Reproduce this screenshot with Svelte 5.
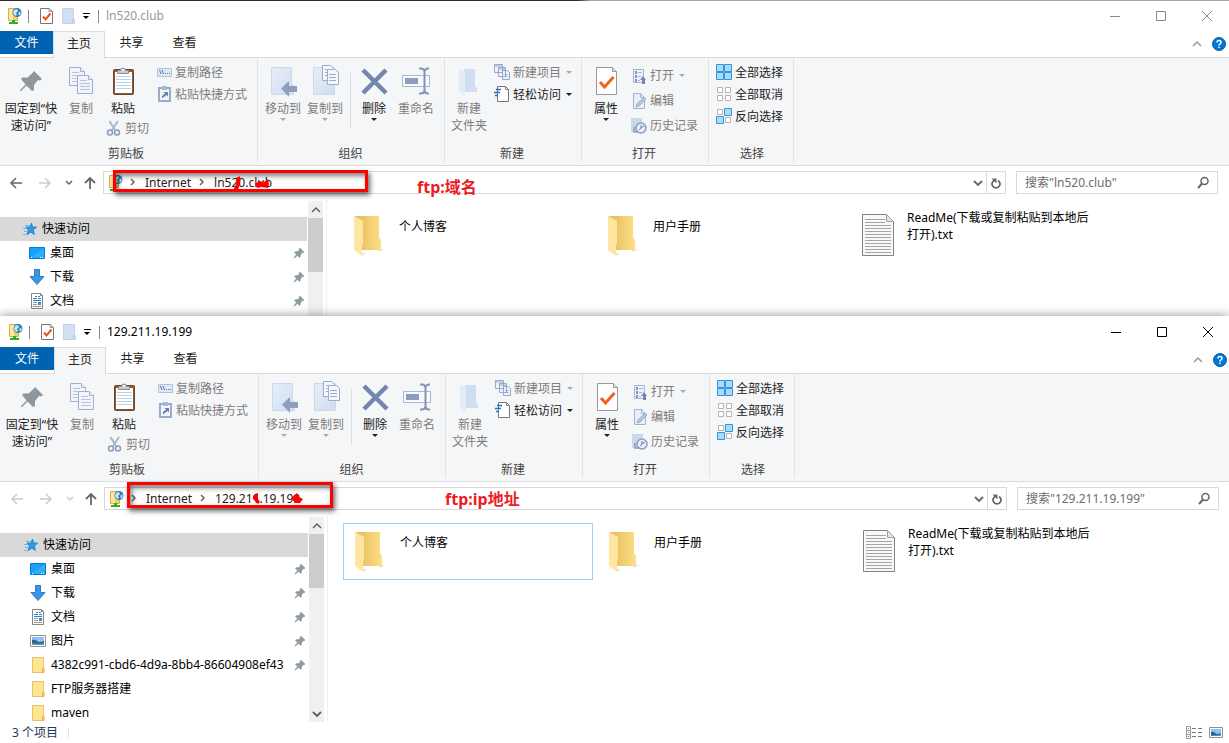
<script>
  const pinned = [
    { icon: 'desktop', label: '桌面', pin: true },
    { icon: 'download', label: '下载', pin: true },
    { icon: 'document', label: '文档', pin: true }
  ];
  const windows = [
    {
      id: 'domain', title: 'ln520.club', active: false, canGoBack: true,
      places: pinned, selected: -1, note: 'ftp:域名'
    },
    {
      id: 'ip', title: '129.211.19.199', active: true, canGoBack: false,
      places: [
        ...pinned,
        { icon: 'picture', label: '图片', pin: true },
        { icon: 'smallfolder', label: '4382c991-cbd6-4d9a-8bb4-86604908ef43', pin: true },
        { icon: 'smallfolder', label: 'FTP服务器搭建', pin: false },
        { icon: 'smallfolder', label: 'maven', pin: false }
      ],
      selected: 0, note: 'ftp:ip地址'
    }
  ];
  const files = [
    { icon: 'folder', name: '个人博客' },
    { icon: 'folder', name: '用户手册' },
    { icon: 'text', name: 'ReadMe(下载或复制粘贴到本地后打开).txt' }
  ];
</script>

{#snippet icon(name)}
  {#if name === 'site'}
    <svg width="16" height="16" viewBox="0 0 16 16"><path d="M1.500.500h9v12h-9z" fill="#f5cf60" stroke="#dcae3c" /><path d="M2 1h4v11H2z" fill="#ffe69a" /><circle cx="10" cy="4.500" r="4.500" fill="#2f7fba" /><path d="M7 2l3-1 1 2-2 2 1 2-2 1-2-3zM11.500 4.500l2-1v3l-2 1z" fill="#c5e8f5" /><path d="M5 12h3v2h3v2H2v-2h3z" fill="#26b02e" /></svg>
  {:else if name === 'checkpage'}
    <svg width="13" height="16" viewBox="0 0 13 16"><path d="M.5.5h8.500l3.500 3v12H.5z" fill="#fff" stroke="#777" /><path d="M9 .5v3h3.500" fill="none" stroke="#999" /><path d="M3 8.500l2.500 3 5-6" fill="none" stroke="#e8541f" stroke-width="2" /></svg>
  {:else if name === 'blankfolder'}
    <svg width="14" height="16" viewBox="0 0 14 16"><path d="M.5.5h11v10l1 1v4H.5z" fill="#d3dff2" stroke="#c3d1e8" /><path d="M10.500 11v4" stroke="#b4c5e0" /></svg>
  {:else if name === 'pin'}
    <svg width="32" height="32" viewBox="0 0 32 32"><path d="M19 6l8 8-2 1.500-2-.5-4 5v5l-2 1-5.500-5.500L6 26l-1 0 0-1 5.500-5.500L6 14l1.500-1.500 5 0 5-4.500z" fill="#8c979f" /></svg>
  {:else if name === 'copy'}
    <svg width="32" height="32" viewBox="0 0 32 32"><g fill="#f1f5fb" stroke="#a0b1cf"><path d="M4.500 2.500h11l4 4v14h-15z" /><path d="M15.500 2.500v4h4" /><path d="M7 7.500h7M7 10.500h6M7 13.500h6M7 16.500h6" stroke="#b7c5dc" /><path d="M12.500 10.500h11l4 4v14h-15z" /><path d="M23.500 10.500v4h4" /><path d="M15 15.500h7M15 18.500h10M15 21.500h10M15 24.500h10" stroke="#b7c5dc" /></g></svg>
  {:else if name === 'paste'}
    <svg width="32" height="32" viewBox="0 0 32 32"><rect x="6.500" y="4.500" width="20" height="25" rx="1" fill="#8a5a36" stroke="#6f452a" /><path d="M8 7h17v21H8z" fill="#fff" /><path d="M9 11.500h15M9 14.500h15M9 17.500h15M9 20.500h15M9 23.500h15" stroke="#b9d2e6" /><path d="M10.500 8.500v-3h3a2.500 2.500 0 0 1 5 0h3v3z" fill="#c9ccd0" stroke="#8b8f94" /><circle cx="16" cy="5" r="1" fill="#fff" /></svg>
  {:else if name === 'cut'}
    <svg width="16" height="16" viewBox="0 0 16 16"><path d="M3.500 1l5.500 9M12 1L6 10" stroke="#a9b8ce" stroke-width="2" /><circle cx="4" cy="12.500" r="2.500" fill="none" stroke="#8a9cbc" stroke-width="1.500" /><circle cx="11" cy="12.500" r="2.500" fill="none" stroke="#8a9cbc" stroke-width="1.500" /></svg>
  {:else if name === 'path'}
    <svg width="16" height="16" viewBox="0 0 16 16"><path d="M.5 4.500h14v8H.5z" fill="#dfe8f5" stroke="#b3c1da" /><path d="M2.500 6l1.500 4M5 6l1.500 4M8 9.500h1M10 9.500h1M12 9.500h1" stroke="#5c76a3" fill="none" /></svg>
  {:else if name === 'shortcut'}
    <svg width="16" height="16" viewBox="0 0 16 16"><rect x="2" y="2" width="11" height="13" fill="#f2f6fc" stroke="#9aabca" stroke-width="2" /><path d="M5 0h5v4H5z" fill="#a9b7cf" /><path d="M5 12.500V10l3-2.500L6.500 6h4.500v4.500L9.500 9z" fill="#6680ab" /></svg>
  {:else if name === 'moveto'}
    <svg width="32" height="32" viewBox="0 0 32 32"><path d="M4.500 2.500h20v16l2 2v9h-22z" fill="url(#pale)" stroke="#ccd9ed" /><path d="M14 23.500l8-7.500v5h8v6h-8v5z" fill="#8e9fbe" /></svg>
  {:else if name === 'copyto'}
    <svg width="32" height="32" viewBox="0 0 32 32"><path d="M4.500 2.500h21v27h-21z" fill="url(#pale)" stroke="#ccd9ed" /><g fill="#f4f7fc" stroke="#9aaccc"><path d="M13.500.5h8l3 3v12h-11z" /><path d="M18.500 4.500h8l3 3v12h-11z" /><path d="M16 4.500h2M16 7.500h2M16 10.500h2M20 9.500h7M20 12.500h7M20 15.500h7" /></g></svg>
  {:else if name === 'delete'}
    <svg width="32" height="32" viewBox="0 0 32 32"><path d="M5 5l23 23M28 5L5 28" stroke="#7387ad" stroke-width="4.500" /></svg>
  {:else if name === 'rename'}
    <svg width="32" height="32" viewBox="0 0 32 32"><path d="M2.500 10.500h27v11h-27z" fill="#f7fafe" stroke="#a8b9d6" /><path d="M5 13h13v6H5z" fill="#8c9dbe" /><path d="M19 3.500h2q3 0 3.500 3 .5-3 3.500-3h1M24.500 6v20M19 28.500h2q3 0 3.500-3 .5 3 3.500 3h1" fill="none" stroke="#8495b4" stroke-width="2" /></svg>
  {:else if name === 'newfolder'}
    <svg width="32" height="32" viewBox="0 0 32 32"><path d="M6 4h16v17l2 2v4H11V4z" fill="#d0def2" /><path d="M6 4l6 3v20l-1 4-5-5z" fill="#e2ebf8" /></svg>
  {:else if name === 'newitem'}
    <svg width="16" height="16" viewBox="0 0 16 16"><g fill="#eef3fa" stroke="#96a9c9"><path d="M.5.5h8v8h-8zM4.500 3.500h7v9h-7zM8.500 6.500h5l2 2v7h-7z" /><path d="M.5 2h8M4.500 5h7M10.500 10.500h3M10.500 12.500h3" /></g></svg>
  {:else if name === 'easy'}
    <svg width="16" height="16" viewBox="0 0 16 16"><path d="M3.500.5h8l3 3v12h-11z" fill="#fff" stroke="#777" /><path d="M11.500.5v3h3" fill="none" stroke="#888" /><path d="M2 3.500h5M0 6.500h6M1 9.500h3" stroke="#2673ba" stroke-width="1.500" /></svg>
  {:else if name === 'props'}
    <svg width="32" height="32" viewBox="0 0 32 32"><path d="M6.500 2.500h16l4 4v23h-20z" fill="#fff" stroke="#999" /><path d="M22.500 2.500v4h4" fill="#ddd" stroke="#999" /><path d="M10 17l4.500 5 9-10" fill="none" stroke="#f26322" stroke-width="3" /></svg>
  {:else if name === 'open'}
    <svg width="16" height="16" viewBox="0 0 16 16"><path d="M2.500 1.500h10v13h-10z" fill="#edf2fa" stroke="#a5b5d1" /><path d="M4 3h2v3H4zM4 7h2v3H4zM4 11h2v3H4z" fill="#8297bf" /><path d="M7 4.500h4M7 8.500h3M7 12.500h2" stroke="#a5b5d1" /><path d="M11 16v-4H9l3-4 3 4h-1v4z" fill="#7388b0" /></svg>
  {:else if name === 'edit'}
    <svg width="16" height="16" viewBox="0 0 16 16"><path d="M2.500.5h7l4 4v11h-11z" fill="#e8eff9" stroke="#a3b4d0" /><path d="M9.500.5v4h4" fill="none" stroke="#a3b4d0" /><path d="M5 14l1-3 7-7 2 2-7 7z" fill="#b7c8e2" stroke="#9caecd" /></svg>
  {:else if name === 'history'}
    <svg width="16" height="16" viewBox="0 0 16 16"><path d="M0 0h11v14H0z" fill="#cad8ed" /><circle cx="10" cy="10" r="5" fill="#e6eefa" stroke="#8d9ebf" stroke-width="1.500" /><path d="M10 7v3l-2 2M10 10l3-2" fill="none" stroke="#6c82a9" /><path d="M3 9v5h4" fill="none" stroke="#8d9ebf" stroke-width="1.500" /></svg>
  {:else if name === 'all'}
    <svg width="16" height="16" viewBox="0 0 16 16"><path d="M.5.5h7v7h-7zM8.500.5h7v7h-7zM.5 8.500h7v7h-7zM8.500 8.500h7v7h-7z" fill="#a9dafa" stroke="#3494dd" /></svg>
  {:else if name === 'none'}
    <svg width="16" height="16" viewBox="0 0 16 16"><path d="M1.500 1.500h5v5h-5zM9.500 1.500h5v5h-5zM1.500 9.500h5v5h-5zM9.500 9.500h5v5h-5z" fill="#fff" stroke="#b4b4b4" /></svg>
  {:else if name === 'invert'}
    <svg width="16" height="16" viewBox="0 0 16 16"><path d="M1.500 1.500h5v5h-5zM9.500 9.500h5v5h-5z" fill="#fff" stroke="#b4b4b4" /><path d="M8.500.5h7v7h-7zM.5 8.500h7v7h-7z" fill="#a9dafa" stroke="#3494dd" /></svg>
  {:else if name === 'star'}
    <svg width="16" height="16" viewBox="0 0 16 16"><path d="M9.500 2l1 4 4 .2-3.200 2.800 1 4.500-3.300-2.500-4 2.500 1.500-4.500L4 6.200l4-.2z" fill="#2f9ae6" stroke="#1f82c9" /><path d="M3 4.500h4M1 7.500h4M2 10.500h3M1 13.500h3" stroke="#6db7e6" /></svg>
  {:else if name === 'desktop'}
    <svg width="16" height="16" viewBox="0 0 16 16"><path d="M.5 2.500h15v11H.5z" fill="#15a1fb" stroke="#087ad0" /><path d="M1 13L15 3v9.500H1z" fill="#4abaff" opacity=".5" /><path d="M2 12.500h1M11 12.500h1M13 12.500h1" stroke="#fff" /></svg>
  {:else if name === 'download'}
    <svg width="16" height="16" viewBox="0 0 16 16"><path d="M5.500.5h5v7h4.500L8 15.500 1 7.500h4.500z" fill="#3c96e6" stroke="#2d7cc5" /></svg>
  {:else if name === 'document'}
    <svg width="16" height="16" viewBox="0 0 16 16"><path d="M2.500.5h9l2 2v13h-11z" fill="#fff" stroke="#858585" /><path d="M11.500.5v2h2" fill="none" stroke="#858585" /><path d="M6 3.500h2M4 5.500h4M4 7.500h8M9 3.500h2M9 5.500h3" stroke="#2684cf" /><path d="M4 9.500h4M4 11.500h4M4 13.500h8" stroke="#999" /><path d="M9 9h3v3H9z" fill="#3f8bc4" /></svg>
  {:else if name === 'picture'}
    <svg width="16" height="16" viewBox="0 0 16 16"><path d="M.5 2.500h15v11H.5z" fill="#fff" stroke="#919191" /><path d="M2 4h12v8H2z" fill="#8bc2f2" /><path d="M2 7q3-1 5 1t7 0v4H2z" fill="#2b6487" /><path d="M2 10q6 1 12 0v2H2z" fill="#5b95b8" /></svg>
  {:else if name === 'smallfolder'}
    <svg width="16" height="16" viewBox="0 0 16 16"><path d="M2.500.5h11v15h-11z" fill="#ffe494" stroke="#e8c35c" /><path d="M12.500 15.500v-4l1.500-1v5z" fill="#ffd867" stroke="#dfb64a" /></svg>
  {:else if name === 'tack'}
    <svg width="12" height="12" viewBox="0 0 12 12"><path d="M7 1l4 4-1 1-1-.2L7.500 8v1.500l-1 1-2-2L1.500 11H1v-.5l2.500-3L1.500 5.500l1-1h2L6.500 3 6 2z" fill="#8c99a2" stroke="#8c99a2" stroke-width=".5" /></svg>
  {:else if name === 'folder'}
    <svg width="32" height="44" viewBox="0 0 32 44"><path d="M24 38l7-1-6 3zM8 44l4-3H8z" fill="#e2e2e2" /><path d="M1 4h24v21l2 3v10H8z" fill="url(#gold)" /><path d="M0 4l9 5v22l-1 3v10l-8-6z" fill="#ffe6a0" /></svg>
  {:else if name === 'text'}
    <svg width="32" height="44" viewBox="0 0 32 44"><path d="M.5 2.500h24l7 7v34H.5z" fill="#f8f8f8" stroke="#838383" /><path d="M3 7.500h20M3 10.500h20M3 13.500h26M3 16.500h26M3 19.500h26M3 22.500h26M3 25.500h26M3 28.500h26M3 31.500h26M3 34.500h26M3 37.500h26M3 40.500h26" stroke="#a4a4a4" /><path d="M24.500 2.500v7h7z" fill="#e4e4e4" stroke="#a0a0a0" /></svg>
  {:else if name === 'back'}
    <svg width="14" height="14" viewBox="0 0 14 14"><path d="M13 7H2M7 2L2 7l5 5" fill="none" stroke="currentColor" stroke-width="1.500" /></svg>
  {:else if name === 'forward'}
    <svg width="14" height="14" viewBox="0 0 14 14"><path d="M1 7h11M7 2l5 5-5 5" fill="none" stroke="currentColor" stroke-width="1.500" /></svg>
  {:else if name === 'up'}
    <svg width="14" height="14" viewBox="0 0 14 14"><path d="M7 13V2M2 7l5-5 5 5" fill="none" stroke="currentColor" stroke-width="1.800" /></svg>
  {:else if name === 'chevdown'}
    <svg width="10" height="8" viewBox="0 0 10 8"><path d="M1 2l4 4 4-4" fill="none" stroke="currentColor" stroke-width="1.800" /></svg>
  {:else if name === 'chevsmall'}
    <svg width="8" height="8" viewBox="0 0 8 8"><path d="M1 2l3 3 3-3" fill="none" stroke="currentColor" stroke-width="1.500" /></svg>
  {:else if name === 'chevup'}
    <svg width="10" height="8" viewBox="0 0 10 8"><path d="M1 6l4-4 4 4" fill="none" stroke="currentColor" stroke-width="1.500" /></svg>
  {:else if name === 'chevright'}
    <svg width="6" height="8" viewBox="0 0 6 8"><path d="M1 1l3 3-3 3" fill="none" stroke="#666" stroke-width="1.500" /></svg>
  {:else if name === 'refresh'}
    <svg width="14" height="14" viewBox="0 0 14 14"><path d="M9 4.500a4 4 0 1 1-4 0" fill="none" stroke="#666" stroke-width="1.800" /><path d="M2.500 2.500h5v5z" fill="#666" /></svg>
  {:else if name === 'search'}
    <svg width="14" height="14" viewBox="0 0 14 14"><circle cx="8.500" cy="5" r="3.500" fill="none" stroke="#666" stroke-width="1.500" /><path d="M6 7.500L2 12" stroke="#666" stroke-width="2" /></svg>
  {:else if name === 'help'}
    <svg width="14" height="14" viewBox="0 0 14 14"><circle cx="7" cy="7" r="6.500" fill="#0078d7" stroke="#0a5b9f" /><path d="M5 5.500q0-2 2-2t2 1.700q0 1-1 1.700-1 .5-1 1.600M7 9.500V11" fill="none" stroke="#fff" stroke-width="1.500" /></svg>
  {:else if name === 'details'}
    <svg width="16" height="13" viewBox="0 0 16 13"><path d="M.5.5h4v12h-4zM.5 4.500h4M.5 8.500h4" fill="#fff" stroke="#999" /><path d="M2 2h1v1H2z" fill="#278ab0" /><path d="M2 6h1v1H2z" fill="#278ad0" /><path d="M2 10h1v1H2z" fill="#d33" /><path d="M6 2.500h4M12 2.500h4M6 6.500h4M12 6.500h4M6 10.500h4M12 10.500h4" stroke="#777" /></svg>
  {:else if name === 'thumbs'}
    <svg width="14" height="11" viewBox="0 0 14 11"><path d="M.5.500h13v10H.5z" fill="#fff" stroke="#919191" /><path d="M2 2h10v7H2z" fill="#8bc2f2" /><path d="M2 5q2-1 4 1t6 0v3H2z" fill="#2b6487" /><path d="M2 8q5 1 10-1v2H2z" fill="#5b95b8" /></svg>
  {:else if name === 'min'}
    <svg width="10" height="10" viewBox="0 0 10 10"><path d="M0 5.500h10" stroke="currentColor" /></svg>
  {:else if name === 'max'}
    <svg width="10" height="10" viewBox="0 0 10 10"><path d="M.5.500h9v9h-9z" fill="none" stroke="currentColor" /></svg>
  {:else if name === 'close'}
    <svg width="10" height="10" viewBox="0 0 10 10"><path d="M0 0l10 10M10 0L0 10" stroke="currentColor" /></svg>
  {/if}
{/snippet}

{#snippet big(name, label, width, enabled, arrow)}
  <button class="big {width}" class:off={!enabled}>
    {@render icon(name)}
    <span>{label}</span>
    {#if arrow}<i class="arrow"></i>{/if}
  </button>
{/snippet}

{#snippet small(name, label, enabled, arrow)}
  <button class="small" class:off={!enabled}>
    {@render icon(name)}
    <span>{label}</span>
    {#if arrow}<i class="arrow"></i>{/if}
  </button>
{/snippet}

<svg class="defs" width="0" height="0" aria-hidden="true">
  <defs>
    <linearGradient id="pale" x1="0" y1="0" x2="1" y2="1"><stop offset="0" stop-color="#e6eef9" /><stop offset="1" stop-color="#d0ddf0" /></linearGradient>
    <linearGradient id="gold"><stop offset="0.200" stop-color="#e8c164" /><stop offset="1" stop-color="#fedf84" /></linearGradient>
  </defs>
</svg>

<main class="desktop">
  {#each windows as win (win.id)}
    <section class="window" class:active={win.active} aria-label={win.title}>
      <header class="titlebar">
        <div class="quick">
          {@render icon('site')}
          <i class="rule first"></i>
          {@render icon('checkpage')}
          {@render icon('blankfolder')}
          <i class="customize"></i>
          <i class="rule"></i>
        </div>
        <h1>{win.title}</h1>
        <div class="controls">
          <button aria-label="最小化">{@render icon('min')}</button>
          <button aria-label="最大化">{@render icon('max')}</button>
          <button aria-label="关闭">{@render icon('close')}</button>
        </div>
      </header>

      <nav class="tabs">
        <button class="file">文件</button>
        <button class="current">主页</button>
        <button>共享</button>
        <button>查看</button>
        <div class="help">
          {@render icon('chevup')}
          {@render icon('help')}
        </div>
      </nav>

      <div class="ribbon">
        <div class="group g1">
          <div class="tools">
            {@render big('pin', '固定到“快速访问”', 'wide', true, false)}
            {@render big('copy', '复制', 'slim', false, false)}
            <div class="clip">
              {@render big('paste', '粘贴', 'slim', true, false)}
              {@render small('cut', '剪切', false, false)}
            </div>
            <div class="stack">
              {@render small('path', '复制路径', false, false)}
              {@render small('shortcut', '粘贴快捷方式', false, false)}
            </div>
          </div>
          <h2>剪贴板</h2>
        </div>
        <div class="group g2">
          <div class="tools">
            {@render big('moveto', '移动到', 'mid', false, true)}
            {@render big('copyto', '复制到', 'mid', false, true)}
            <i class="split"></i>
            {@render big('delete', '删除', 'mid', true, true)}
            {@render big('rename', '重命名', 'mid', false, false)}
          </div>
          <h2>组织</h2>
        </div>
        <div class="group g3">
          <div class="tools">
            {@render big('newfolder', '新建\n文件夹', 'mid', false, false)}
            <div class="stack">
              {@render small('newitem', '新建项目', false, true)}
              {@render small('easy', '轻松访问', true, true)}
            </div>
          </div>
          <h2>新建</h2>
        </div>
        <div class="group g4">
          <div class="tools">
            {@render big('props', '属性', 'mid', true, true)}
            <div class="stack loose">
              {@render small('open', '打开', false, true)}
              {@render small('edit', '编辑', false, false)}
              {@render small('history', '历史记录', false, false)}
            </div>
          </div>
          <h2>打开</h2>
        </div>
        <div class="group g5">
          <div class="tools">
            <div class="stack">
              {@render small('all', '全部选择', true, false)}
              {@render small('none', '全部取消', true, false)}
              {@render small('invert', '反向选择', true, false)}
            </div>
          </div>
          <h2>选择</h2>
        </div>
      </div>

      <div class="location">
        <div class="history">
          <button class:dim={!win.canGoBack} aria-label="后退">{@render icon('back')}</button>
          <button class="dim" aria-label="前进">{@render icon('forward')}</button>
          <button class="recent" class:dim={!win.canGoBack} aria-label="最近浏览的位置">{@render icon('chevsmall')}</button>
          <button aria-label="上移">{@render icon('up')}</button>
        </div>
        <div class="address">
          {@render icon('site')}
          <span class="sep root-sep">{@render icon('chevright')}</span>
          <span>Internet</span>
          <span class="sep">{@render icon('chevright')}</span>
          <span>{win.title}</span>
          <button class="drop" aria-label="以前的位置">{@render icon('chevdown')}</button>
          <button class="refresh" aria-label="刷新">{@render icon('refresh')}</button>
        </div>
        <label class="search">
          <input type="text" aria-label="搜索" placeholder={`搜索"${win.title}"`} />
          {@render icon('search')}
        </label>
        <div class="mark {win.id}"></div>
        <svg class="scribble {win.id}" width="72" height="16" viewBox="0 0 72 16">
          {#if win.id === 'domain'}
            <path d="M8 1q2 5-3 14" fill="none" stroke="#fe0000" stroke-width="4" />
            <path d="M25 8l4-3 5 1 4-3 1 5-1 4-7-1-4 1z" fill="#fe0000" />
          {:else}
            <path d="M16 2q-6 1-5 6l5 5 2-2-2-3z" fill="#fe0000" />
            <path d="M49 7l6-5 2 4 4 2-3 4h-5z" fill="#fe0000" />
          {/if}
        </svg>
        <strong class="note {win.id}">{win.note}</strong>
      </div>

      <div class="body">
        <aside>
          <ul>
            <li class="root">{@render icon('star')}<span>快速访问</span></li>
            {#each win.places as place (place.label)}
              <li>
                {@render icon(place.icon)}
                <span>{place.label}</span>
                {#if place.pin}{@render icon('tack')}{/if}
              </li>
            {/each}
          </ul>
          <div class="scroll">
            <span>{@render icon('chevup')}</span>
            <i></i>
            {#if win.active}<span>{@render icon('chevdown')}</span>{/if}
          </div>
        </aside>
        <div class="files">
          {#each files as file, i (file.name)}
            <div class="entry" class:selected={i === win.selected}>
              {@render icon(file.icon)}
              <div class="name"><span>{file.name}</span></div>
            </div>
          {/each}
        </div>
      </div>

      {#if win.active}
        <footer>
          <span>3 个项目</span>
          <i></i>
          <div class="views">
            {@render icon('details')}
            {@render icon('thumbs')}
          </div>
        </footer>
      {/if}
    </section>
  {/each}
</main>

<style>
  :global(body) { margin: 0; background: #fff; }
  .defs { position: absolute; }
  .desktop {
    display: flex; flex-direction: column; height: 100vh; overflow: hidden;
    font: 12px/17px "Noto Sans", "Noto Sans CJK SC", sans-serif; color: #222;
  }
  svg { display: block; flex: none; }
  button { padding: 0; border: 0; background: none; font: inherit; color: inherit; }
  h1, h2 { margin: 0; font-size: 12px; font-weight: 400; }
  ul { margin: 0; padding: 0; list-style: none; }

  .window { --edge: 0px; display: flex; flex: none; flex-direction: column; background: #fff; }
  .window.active {
    --edge: 1px; position: relative; flex: 1; min-height: 0;
    box-shadow: 0 0 10px rgba(0, 0, 0, .45);
  }

  .titlebar { display: flex; flex: none; align-items: center; height: 30px; padding-left: calc(7px + var(--edge)); border-top: 1px solid #999; }
  .window:not(.active) .titlebar { border-image: linear-gradient(90deg, #2d2a2e 47%, #a6a6a6 48%) 1; }
  .active .titlebar { border-top-color: #fff; }
  .quick { display: flex; align-items: center; }
  .quick svg { margin-right: 9px; }
  .rule { width: 1px; height: 13px; background: #888; }
  .rule.first { margin: 0 11px 0 -4px; }
  .customize { position: relative; width: 7px; margin-right: 8px; margin-left: -2px; height: 6px; border-top: 1px solid #000; }
  .customize::after { content: ""; position: absolute; top: 2px; left: 0; border: 3px solid transparent; border-top-color: #000; border-bottom: 0; }
  h1 { padding-bottom: 2px; margin-left: 7px; color: #999; }
  .active h1 { color: #000; }
  .controls { display: flex; margin: 0 calc(-1px - var(--edge)) 0 auto; color: #888; }
  .active .controls { color: #000; }
  .controls button { display: grid; place-items: center; width: 46px; height: 28px; }

  .tabs { display: flex; flex: none; height: 26px; border-bottom: 1px solid #dadbdc; }
  .tabs button { width: 53px; height: 23px; padding-top: 1px; line-height: 22px; text-align: center; }
  .tabs .file { width: calc(53px + var(--edge)); background: #0063b1; color: #fff; }
  .tabs .current { width: 52px; height: 27px; padding-bottom: 3px; border: 1px solid #dadbdc; border-bottom: 0; background: #f5f6f7; }
  .help { display: flex; align-items: center; gap: 10px; margin-left: auto; padding-right: calc(3px - var(--edge)); color: #999; }

  .ribbon { display: flex; flex: none; height: 107px; padding-left: var(--edge); background: #f5f6f7; border-bottom: 1px solid #dadbdc; }
  .group { display: flex; flex-direction: column; box-sizing: border-box; height: 104px; padding-top: 3px; border-right: 1px solid #e2e3e4; }
  .g1 { width: 258px; }
  .g2 { width: 187px; padding-left: 4px; }
  .g3 { width: 137px; padding-left: 3px; }
  .g4 { width: 127px; padding-left: 3px; }
  .g5 { width: 85px; padding-left: 7px; }
  .tools { display: flex; flex: 1; align-items: flex-start; }
  h2 { height: 17px; padding-right: 5px; color: #444; text-align: center; }
  .big { display: flex; flex-direction: column; align-items: center; gap: 3px; padding-top: 4px; white-space: pre-line; }
  .big .arrow { margin-top: -2px; }
  .wide { width: 62px; }
  .slim { width: 38px; }
  .mid { width: 42px; }
  .g1 .wide span { width: 56px; }
  .clip { width: 53px; padding-left: 4px; }
  .clip .small { margin-left: 2px; }
  .small { display: flex; align-items: center; gap: 3px; height: 22px; white-space: nowrap; }
  .small .arrow { margin-left: 2px; }
  .g1 .stack .small { gap: 2px; }
  .loose { padding-top: 2px; }
  .loose .small { height: 25px; }
  .g3 .stack, .g4 .stack { padding-left: 4px; }
  .off { color: #7d7d7d; }
  .arrow { border: 3px solid transparent; border-top-color: #222; border-bottom: 0; }
  .off .arrow { border-top-color: #aaa; }
  .split { width: 1px; height: 55px; margin: 12px 2px 0 4px; background: #dcddde; }

  .location { position: relative; display: flex; flex: none; align-items: center; height: 23px; padding: 5px calc(11px - var(--edge)) 6px calc(9px + var(--edge)); }
  .history { display: flex; align-items: center; width: 94px; color: #666; }
  .history button { width: 14px; margin-right: 15px; }
  .history .recent { width: 8px; margin: 0 10px 0 -2px; }
  .history .dim { color: #ccc; }
  .address { display: flex; flex: 1; align-items: center; box-sizing: border-box; height: 23px; padding-left: 4px; border: 1px solid #d9d9d9; }
  .address > span { padding-bottom: 1px; }
  .sep { margin: 0 9px 0 8px; }
  .root-sep { margin-left: 6px; }
  .drop { display: grid; place-items: center; width: 17px; height: 21px; margin-left: auto; color: #666; }
  .refresh { display: grid; place-items: center; width: 19px; height: 21px; border-left: 1px solid #d9d9d9; }
  .search { display: flex; align-items: center; box-sizing: border-box; width: 202px; height: 23px; margin-left: 10px; padding: 0 7px 0 8px; border: 1px solid #d9d9d9; }
  .search input { flex: 1; min-width: 0; padding: 0; border: 0; outline: 0; background: none; font: inherit; }
  .search input::placeholder { color: #6d6d6d; opacity: 1; }

  .mark { position: absolute; box-sizing: border-box; border: 3px solid #fe0000; box-shadow: 2px 3px 5px rgba(0, 0, 0, .6), inset 2px 3px 5px rgba(0, 0, 0, .5); }
  .mark.domain { left: 113px; top: 4px; width: 255px; height: 22px; }
  .mark.ip { left: 127px; top: 0; width: 206px; height: 26px; }
  .scribble { position: absolute; top: 10px; left: 230px; }
  .scribble.ip { left: 242px; top: 9px; }
  .note { position: absolute; top: 11px; left: 417px; font-size: 16px; line-height: 20px; color: #ed1c24; }
  .note.ip { left: 445px; top: 7px; }

  .body { display: flex; height: 116px; overflow: hidden; }
  .active .body { flex: 1; height: auto; }
  aside { display: flex; width: calc(326px + var(--edge)); border-right: 1px solid #f0f0f0; }
  ul { width: calc(307px + var(--edge)); margin-right: 1px; padding-top: 17px; color: #000; }
  li { display: flex; align-items: center; gap: 5px; box-sizing: border-box; height: 24px; padding: 0 2px 0 calc(29px + var(--edge)); }
  li span { flex: 1; overflow: hidden; padding-bottom: 2px; white-space: nowrap; }
  .root { gap: 4px; padding-left: calc(22px + var(--edge)); background: #d9d9d9; }
  .scroll { display: flex; flex-direction: column; width: 15px; margin-top: 1px; background: #f0f0f0; color: #606060; }
  .scroll span { display: grid; place-items: center; height: 17px; }
  .scroll i { flex: none; height: 54px; margin-bottom: auto; background: #cdcdcd; }
  .files { display: grid; flex: 1; grid-template-columns: repeat(auto-fill, 250px); align-content: start; gap: 4px; padding: 7px 0 0 15px; color: #000; }
  .entry { display: flex; box-sizing: border-box; height: 57px; gap: 13px; padding: 4px 7px 0 11px; border: 1px solid transparent; }
  .selected { border-color: #99d1ff; }
  .name { display: flex; align-items: center; height: 36px; margin-top: -4px; }

  footer { display: flex; flex: none; align-items: center; height: 21px; padding: 0 6px 0 12px; color: #1e395b; }
  footer i { width: 1px; height: 11px; margin-left: 10px; background: #e4e4e4; }
  .views { display: flex; align-items: center; gap: 7px; margin-left: auto; }
</style>
